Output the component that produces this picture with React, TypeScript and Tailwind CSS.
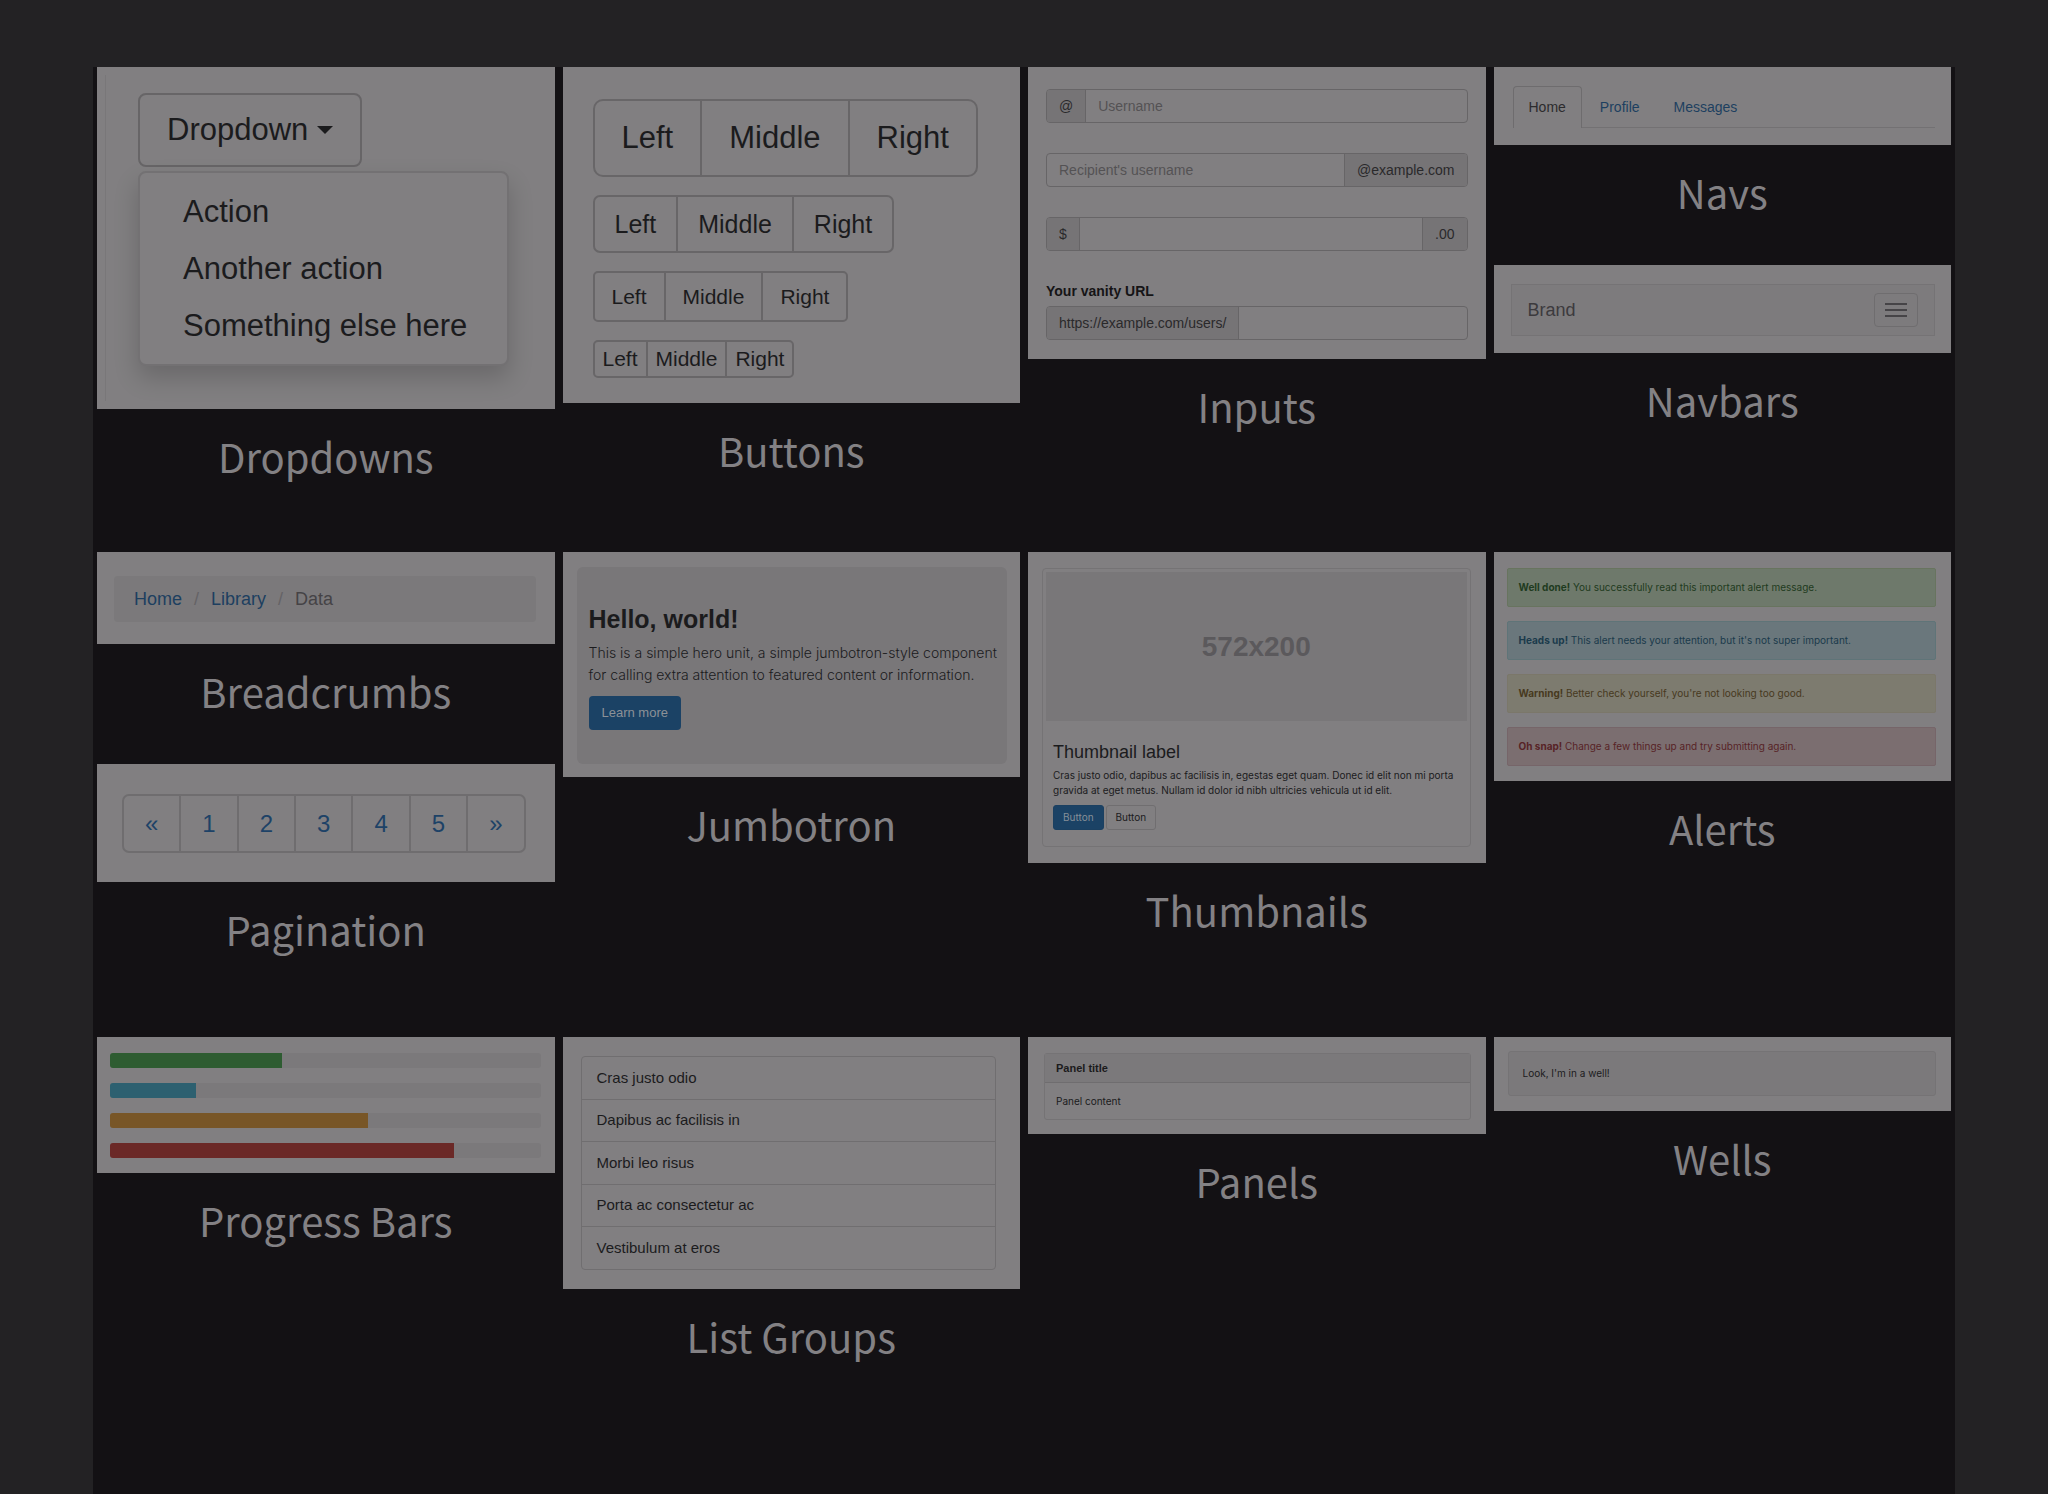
import React from "react";
import type { ReactNode } from "react";

type ShowcaseProps = {
	title: string;
	className: string;
	children: ReactNode;
};

const groupSizes = [
	{ id: "lg", group: "rounded-[10px]", button: "px-[27px] text-[31px] leading-[74px]" },
	{ id: "md", group: "rounded-[7px]", button: "px-5 text-[25px] leading-[54px]" },
	{ id: "sm", group: "rounded-[5px]", button: "px-[17px] text-[21px] leading-[47px]" },
	{ id: "xs", group: "rounded-[5px]", button: "px-2 text-[21px] leading-[34px]" },
];

const alerts = [
	{ strong: "Well done!", text: "You successfully read this important alert message.", style: "bg-[#6e796b] border-[#68745f] text-[#1f3b20]" },
	{ strong: "Heads up!", text: "This alert needs your attention, but it's not super important.", style: "bg-[#6a777c] border-[#5f7478] text-[#1a3a4b]" },
	{ strong: "Warning!", text: "Better check yourself, you're not looking too good.", style: "bg-[#7d7b6f] border-[#7b776a] text-[#47391e]" },
	{ strong: "Oh snap!", text: "Change a few things up and try submitting again.", style: "bg-[#7b6e70] border-[#766569] text-[#572326]" },
];

const bars = [
	{ label: "Success", value: 40, color: "bg-[#2e5c31]" },
	{ label: "Info", value: 20, color: "bg-[#2d6070]" },
	{ label: "Warning", value: 60, color: "bg-[#785627]" },
	{ label: "Danger", value: 80, color: "bg-[#6b2927]" },
];

const listItems = ["Cras justo odio", "Dapibus ac facilisis in", "Morbi leo risus", "Porta ac consectetur ac", "Vestibulum at eros"];

function Showcase({ title, className, children }: ShowcaseProps) {
	return (
		<figure>
			<div className={`bg-[#817f81] text-[#1b1b1d] ${className}`}>{children}</div>
			<figcaption className="pt-[19px] pb-[45px] text-center font-['Noto_Sans_CJK_SC',sans-serif] text-[40px] leading-[56px] text-[#838184]">
				{title}
			</figcaption>
		</figure>
	);
}

function Dropdowns() {
	return (
		<Showcase title="Dropdowns" className="py-2 pl-2">
			<div className="border-l border-[#797779] pt-[18px] pb-[35px] pl-[32px]">
				<button type="button" className="flex items-center gap-[9px] rounded-[8px] border-2 border-[#676567] px-[27px] text-[31px] leading-[70px]">
					Dropdown
					<svg width="16" height="8" viewBox="0 0 16 8" fill="currentColor">
						<path d="M0 0h16L8 8z" />
					</svg>
				</button>
				<ul className="mt-1 mr-[46px] rounded-[8px] border-2 border-[#737173] bg-[#817f81] py-[10px] pl-[43px] text-[31px] leading-[57px] shadow-[0_12px_24px_rgba(0,0,0,0.18)]">
					<li><a href="#action">Action</a></li>
					<li><a href="#another">Another action</a></li>
					<li><a href="#else">Something else here</a></li>
				</ul>
			</div>
		</Showcase>
	);
}

function Buttons() {
	return (
		<Showcase title="Buttons" className="flex flex-col items-start gap-[18px] pt-[32px] pb-[25px] pl-[30px]">
			{groupSizes.map((size) => (
				<div key={size.id} className={`flex divide-x-2 divide-[#686668] border-2 border-[#686668] ${size.group}`}>
					<button type="button" className={size.button}>Left</button>
					<button type="button" className={size.button}>Middle</button>
					<button type="button" className={size.button}>Right</button>
				</div>
			))}
		</Showcase>
	);
}

const groupClass = "flex rounded-[4px] border border-[#676567] leading-[32px] overflow-hidden";
const addonClass = "bg-[#767476] px-3";
const inputClass = "min-w-0 flex-1 px-3 outline-none placeholder:text-[#545254]";

function Inputs() {
	return (
		<Showcase title="Inputs" className="px-[18px] pt-[22px] pb-[19px] text-[14px] text-[#2a292b]">
			<div className={groupClass}>
				<label htmlFor="username" className={`border-r border-[#676567] ${addonClass}`}>@</label>
				<input id="username" type="text" placeholder="Username" className={inputClass} />
			</div>
			<div className={`mt-[30px] ${groupClass}`}>
				<input id="recipient" type="text" placeholder="Recipient's username" className={inputClass} />
				<label htmlFor="recipient" className={`border-l border-[#676567] ${addonClass}`}>@example.com</label>
			</div>
			<div className={`mt-[30px] ${groupClass}`}>
				<label htmlFor="amount" className={`border-r border-[#676567] ${addonClass}`}>$</label>
				<input id="amount" type="text" className={inputClass} />
				<span className={`border-l border-[#676567] ${addonClass}`}>.00</span>
			</div>
			<label htmlFor="vanity" className="mt-[30px] mb-[5px] block font-bold leading-[20px] text-[#151416]">Your vanity URL</label>
			<div className={groupClass}>
				<span className={`border-r border-[#676567] ${addonClass}`}>https://example.com/users/</span>
				<input id="vanity" type="text" className={inputClass} />
			</div>
		</Showcase>
	);
}

function Navs() {
	return (
		<Showcase title="Navs" className="pt-[19px] pr-4 pb-[17px] pl-[19px]">
			<nav className="flex gap-[2px] border-b border-[#737173] text-[14px] leading-[20px] text-[#1d3f60]">
				<a href="#home" className="-mb-px rounded-t-[4px] border border-b-0 border-[#6e6c6e] bg-[#817f81] px-[15px] pt-[10px] pb-[11px] text-[#2c2b2d]">Home</a>
				<a href="#profile" className="px-4 pt-[11px] pb-[10px]">Profile</a>
				<a href="#messages" className="px-4 pt-[11px] pb-[10px]">Messages</a>
			</nav>
		</Showcase>
	);
}

function Navbars() {
	return (
		<Showcase title="Navbars" className="pt-[19px] pr-4 pb-[17px] pl-[17px]">
			<nav className="flex items-center justify-between border border-[#757375] bg-[#7d7b7d] py-[8px] px-4">
				<a href="#brand" className="text-[18px] leading-[34px] text-[#3c3a3d]">Brand</a>
				<button type="button" aria-label="Toggle navigation" className="flex flex-col gap-1 rounded-[4px] border border-[#6f6d6f] px-[10px] py-[9px]">
					<span className="h-[2px] w-[22px] bg-[#464447]" />
					<span className="h-[2px] w-[22px] bg-[#464447]" />
					<span className="h-[2px] w-[22px] bg-[#464447]" />
				</button>
			</nav>
		</Showcase>
	);
}

function Breadcrumbs() {
	return (
		<Showcase title="Breadcrumbs" className="pt-6 pr-[19px] pb-[22px] pl-[17px]">
			<ol className="flex gap-3 rounded-[4px] bg-[#7b797b] px-5 text-[18px] leading-[46px] text-[#1d3f60]">
				<li><a href="#home">Home</a></li>
				<li className="text-[#656366]">/</li>
				<li><a href="#library">Library</a></li>
				<li className="text-[#656366]">/</li>
				<li className="text-[#454346]">Data</li>
			</ol>
		</Showcase>
	);
}

function Pagination() {
	return (
		<Showcase title="Pagination" className="flex pt-[30px] pb-[29px] pl-[25px]">
			<nav className="flex divide-x-2 divide-[#6f6d6f] rounded-[7px] border-2 border-[#6f6d6f] text-[24px] leading-[55px] text-[#1d4267]">
				{["«", "1", "2", "3", "4", "5", "»"].map((p) => (
					<a key={p} href="#page" className="px-[21px]">{p}</a>
				))}
			</nav>
		</Showcase>
	);
}

function Jumbotron() {
	return (
		<Showcase title="Jumbotron" className="pt-[15px] pr-[13px] pb-[13px] pl-[14px]">
			<div className="rounded-[6px] bg-[#797779] px-3 pt-[35px] pb-[34px]">
				<h2 className="text-[25px] font-bold leading-[34px]">Hello, world!</h2>
				<p className="mt-[6px] whitespace-nowrap font-['Inter',sans-serif] text-[14px] font-light leading-[22px]">
					This is a simple hero unit, a simple jumbotron-style component
					<br />
					for calling extra attention to featured content or information.
				</p>
				<button type="button" className="mt-[10px] rounded-[4px] bg-[#1b4265] px-[13px] text-[13px] leading-[34px] text-[#8c9197]">Learn more</button>
			</div>
		</Showcase>
	);
}

function Thumbnails() {
	return (
		<Showcase title="Thumbnails" className="pt-4 pr-[15px] pb-4 pl-[14px]">
			<div className="rounded-[4px] border border-[#757375] p-[3px]">
				<div className="bg-[#797779] text-center text-[28px] font-bold leading-[149px] text-[#5b595c]">572x200</div>
				<div className="px-[7px] pt-[21px] pb-[13px]">
					<h3 className="text-[18px] leading-[20px]">Thumbnail label</h3>
					<p className="mt-[6px] whitespace-nowrap font-['Inter',sans-serif] text-[10px] leading-[15px]">
						Cras justo odio, dapibus ac facilisis in, egestas eget quam. Donec id elit non mi porta
						<br />
						gravida at eget metus. Nullam id dolor id nibh ultricies vehicula ut id elit.
					</p>
					<div className="mt-[7px] flex gap-[2px] font-['Inter',sans-serif] text-[10px] leading-[23px]">
						<button type="button" className="rounded-[3px] border border-[#1b4061] bg-[#1b4265] px-[9px] text-[#858f98]">Button</button>
						<button type="button" className="rounded-[3px] border border-[#706e70] px-[9px]">Button</button>
					</div>
				</div>
			</div>
		</Showcase>
	);
}

function Alerts() {
	return (
		<Showcase title="Alerts" className="flex flex-col gap-[14px] pt-4 pr-[15px] pb-[15px] pl-[13px]">
			{alerts.map((a) => (
				<div key={a.strong} role="alert" className={`rounded-[2px] border px-[11px] font-['Inter',sans-serif] text-[10px] leading-[37px] ${a.style}`}>
					<strong>{a.strong}</strong> {a.text}
				</div>
			))}
		</Showcase>
	);
}

function ProgressBars() {
	return (
		<Showcase title="Progress Bars" className="flex flex-col gap-[15px] pt-4 pr-[14px] pb-[15px] pl-[13px]">
			{bars.map((bar) => (
				<div key={bar.label} role="progressbar" aria-label={bar.label} aria-valuenow={bar.value} className="h-[15px] overflow-hidden rounded-[3px] bg-[#7b797b]">
					<div className={`h-full ${bar.color}`} style={{ width: `${bar.value}%` }} />
				</div>
			))}
		</Showcase>
	);
}

function ListGroups() {
	return (
		<Showcase title="List Groups" className="pt-[19px] pr-6 pb-[19px] pl-[18px]">
			<ul className="flex min-h-[214px] flex-col divide-y divide-[#706e70] rounded-[4px] border border-[#706e70] text-[15px]">
				{listItems.map((item) => (
					<li key={item} className="flex flex-1 items-center px-[15px]">{item}</li>
				))}
			</ul>
		</Showcase>
	);
}

function Panels() {
	return (
		<Showcase title="Panels" className="pt-4 pr-[15px] pb-[14px] pl-4">
			<section className="rounded-[3px] border border-[#757375]">
				<h3 className="border-b border-[#6f6d6f] bg-[#7b797b] px-[11px] text-[11px] font-bold leading-[28px]">Panel title</h3>
				<p className="px-[11px] font-['Inter',sans-serif] text-[10px] leading-[36px]">Panel content</p>
			</section>
		</Showcase>
	);
}

function Wells() {
	return (
		<Showcase title="Wells" className="pt-[14px] pr-[15px] pb-[15px] pl-[14px]">
			<p className="rounded-[3px] border border-[#757375] bg-[#7b797b] px-[14px] font-['Inter',sans-serif] text-[10px] leading-[43px]">Look, I'm in a well!</p>
		</Showcase>
	);
}

export default function App() {
	return (
		<div className="flex min-h-screen flex-col bg-[#232224] px-[93px] pt-[67px] font-['Liberation_Sans',Arial,sans-serif]">
			<main className="grid flex-1 auto-rows-[minmax(485px,auto)] grid-cols-4 content-start gap-x-2 bg-[#131114] px-1">
				<Dropdowns />
				<Buttons />
				<Inputs />
				<div>
					<Navs />
					<Navbars />
				</div>

				<div>
					<Breadcrumbs />
					<Pagination />
				</div>
				<Jumbotron />
				<Thumbnails />
				<Alerts />

				<ProgressBars />
				<ListGroups />
				<Panels />
				<Wells />
			</main>
		</div>
	);
}
